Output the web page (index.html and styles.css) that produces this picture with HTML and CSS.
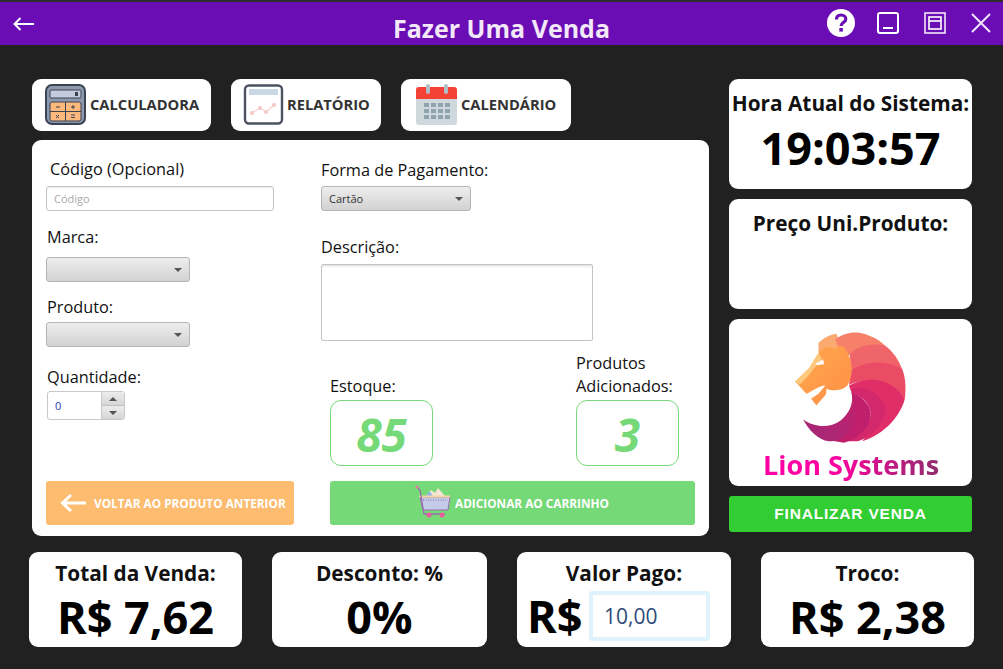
FILE: index.html
```html
<!DOCTYPE html>
<html lang="pt-BR">
<head>
<meta charset="utf-8">
<title>Fazer Uma Venda</title>
<link rel="stylesheet" href="styles.css">
</head>
<body>
<header class="titlebar">
  <svg class="back" viewBox="0 0 21 14" width="21" height="14"><path d="M1 7H21M7.500 1L1.500 7L7.500 13" fill="none" stroke="#fff" stroke-width="2"/></svg>
  <h1 class="title">Fazer Uma Venda</h1>
  <div class="win">
    <svg width="30" height="30" viewBox="0 0 30 30"><circle cx="15" cy="15" r="14" fill="#fff"/><path d="M10.500 11.500C10.500 8.500 12.500 7 15 7C17.800 7 19.800 8.700 19.800 11C19.800 14.500 15.200 14.500 15.200 17.500V18" fill="none" stroke="#6a0db5" stroke-width="3.200"/><rect x="13.300" y="20" width="3.600" height="3.600" fill="#6a0db5"/></svg>
    <svg width="22" height="22" viewBox="0 0 22 22"><rect x="1" y="1" width="20" height="20" rx="2" fill="none" stroke="#fff" stroke-width="2"/><path d="M6 16H16" stroke="#fff" stroke-width="2"/></svg>
    <svg width="22" height="22" viewBox="0 0 22 22"><rect x="1" y="1" width="20" height="20" fill="none" stroke="#f2e6fa" stroke-width="1.600"/><rect x="5" y="5" width="12" height="12" fill="none" stroke="#fff" stroke-width="1.600"/><path d="M5 9H17" stroke="#fff" stroke-width="1.600"/></svg>
    <svg width="20" height="20" viewBox="0 0 20 20"><path d="M1 1L19 19M19 1L1 19" stroke="#f2e6fa" stroke-width="2"/></svg>
  </div>
</header>

<main class="main">
  <section class="left">
    <nav class="tools">
      <button class="tool tool-calc">
        <svg width="41" height="41" viewBox="0 0 41 41"><rect x="1" y="1" width="39" height="39" rx="6" fill="#8d99ae" stroke="#3b4252" stroke-width="2"/><rect x="5" y="6" width="31" height="8" rx="1" fill="#c3cbdc" stroke="#3b4252"/><rect x="30" y="8" width="3" height="4" fill="#3b4252"/><rect x="5" y="18" width="31" height="19" rx="2" fill="#fdb97d" stroke="#3b4252"/><path d="M20.500 18V37M5 27.500H36" stroke="#3b4252"/><path d="M11 23H15M26 23H30M28 21V25M11 31L14 34M14 31L11 34M26 31H30M26 33.500H30" stroke="#3b4252"/></svg>
        <span>CALCULADORA</span>
      </button>
      <button class="tool tool-rel">
        <svg width="41" height="41" viewBox="0 0 41 41"><rect x="2" y="1.500" width="37" height="38" rx="4" fill="#fff" stroke="#4c5260" stroke-width="2.400"/><rect x="6" y="5" width="29" height="6" fill="#c9d8e4"/><path d="M9 29L17 24L23 28L31 21" fill="none" stroke="#f6d2d2" stroke-width="1.200"/><circle cx="9" cy="29" r="2" fill="#f4c6c6"/><circle cx="17" cy="24" r="2" fill="#f4c6c6"/><circle cx="23" cy="28" r="2" fill="#f4c6c6"/><circle cx="31" cy="21" r="2" fill="#f4c6c6"/></svg>
        <span>RELATÓRIO</span>
      </button>
      <button class="tool tool-cal">
        <svg width="41" height="41" viewBox="0 0 41 41"><rect x="0" y="3" width="41" height="38" rx="3" fill="#cfd8dc"/><path d="M0 15V6a3 3 0 0 1 3-3H38a3 3 0 0 1 3 3V15Z" fill="#f44336"/><rect x="10" y="0" width="4" height="10" rx="2" fill="#b0bec5"/><rect x="28" y="0" width="4" height="10" rx="2" fill="#b0bec5"/><g class="cal-grid"><rect x="8" y="19" width="5" height="4"/><rect x="15" y="19" width="5" height="4"/><rect x="22" y="19" width="5" height="4"/><rect x="29" y="19" width="5" height="4"/><rect x="8" y="25" width="5" height="4"/><rect x="15" y="25" width="5" height="4"/><rect x="22" y="25" width="5" height="4"/><rect x="29" y="25" width="5" height="4"/><rect x="8" y="31" width="5" height="4"/><rect x="15" y="31" width="5" height="4"/><rect x="22" y="31" width="5" height="4"/><rect x="29" y="31" width="5" height="4"/></g></svg>
        <span>CALENDÁRIO</span>
      </button>
    </nav>

    <form class="form">
      <div class="columns">
        <div class="col-a">
          <label class="lab lab-code">Código (Opcional)</label>
          <input class="field" placeholder="Código">
          <label class="lab lab-marca">Marca:</label>
          <div class="combo"><i class="caret"></i></div>
          <label class="lab lab-prod">Produto:</label>
          <div class="combo"><i class="caret"></i></div>
          <label class="lab lab-qtd">Quantidade:</label>
          <div class="spinner">
            <span class="spin-val">0</span>
            <span class="spin-btns"><b><i class="caret up"></i></b><b><i class="caret"></i></b></span>
          </div>
        </div>
        <div class="col-b">
          <label class="lab lab-forma">Forma de Pagamento:</label>
          <div class="combo combo-pay"><span>Cartão</span><i class="caret"></i></div>
          <label class="lab lab-desc">Descrição:</label>
          <textarea class="desc"></textarea>
          <div class="stats">
            <div class="stat">
              <div class="stat-lab">Estoque:</div>
              <div class="stat-box">85</div>
            </div>
            <div class="stat">
              <div class="stat-lab">Produtos<br>Adicionados:</div>
              <div class="stat-box">3</div>
            </div>
          </div>
        </div>
      </div>
      <div class="actions">
        <button type="button" class="act act-back">
          <svg width="26" height="20" viewBox="0 0 26 20"><path d="M26 10H3M11 2L2.500 10L11 18" fill="none" stroke="#fff" stroke-width="3"/></svg>
          <span>VOLTAR AO PRODUTO ANTERIOR</span>
        </button>
        <button type="button" class="act act-add">
          <svg class="cart" width="36" height="34" viewBox="0 0 36 34"><path d="M10 12L16 5L20 8L23 3L30 11Z" fill="#f7e6d8"/><path d="M10 12L15 6L18 12Z" fill="#8db4e2"/><path d="M5 12H35L33 25H8Z" fill="#c3cbe8" stroke="#9a6bb0"/><path d="M4 11.500H35" stroke="#f2d6a0" stroke-width="2"/><path d="M8 15H32" stroke="#8a6bb0" stroke-dasharray="1 1.500"/><path d="M2 2L5 5L9 29H30" fill="none" stroke="#9a6bb0" stroke-width="1.300"/><circle cx="2" cy="2" r="1.500" fill="#e87aa8"/><circle cx="14" cy="30" r="2.500" fill="#e8609a"/><circle cx="27" cy="30" r="2.500" fill="#e8609a"/></svg>
          <span>ADICIONAR AO CARRINHO</span>
        </button>
      </div>
    </form>
  </section>

  <aside class="right">
    <div class="card card-time">
      <div class="h">Hora Atual do Sistema:</div>
      <div class="clock">19:03:57</div>
    </div>
    <div class="card card-price">
      <div class="h">Preço Uni.Produto:</div>
    </div>
    <div class="card card-logo">
      <svg class="lion" width="245" height="133" viewBox="0 0 735 400">
        <defs>
          <linearGradient id="g1" x1="0" y1="1" x2="1" y2="0"><stop offset="0" stop-color="#a02a78"/><stop offset="1" stop-color="#c41f6c"/></linearGradient>
          <linearGradient id="g2" x1="0" y1="0" x2="1" y2="1"><stop offset="0" stop-color="#ffa84f"/><stop offset="1" stop-color="#ff8f45"/></linearGradient>
        </defs>
        <path d="M268 72C285 55 305 46 322 44L340 90L268 100Z" fill="#fbaa70"/>
        <path d="M318 62C340 44 370 38 395 42C430 50 455 65 470 82C420 75 385 85 362 110L330 90Z" fill="#f7806a"/>
        <path d="M362 108C385 80 425 72 468 80C495 100 510 125 520 152C470 130 420 135 368 165Z" fill="#f0656a"/>
        <path d="M366 155C420 120 480 128 520 150C530 175 532 205 528 240C490 190 430 170 360 198Z" fill="#ea4c66"/>
        <path d="M360 200C425 165 495 185 528 240C515 290 470 345 400 368C445 310 455 260 420 225C405 212 385 208 365 214Z" fill="#e02f68"/>
        <path d="M365 212C415 195 455 225 470 270C470 310 430 355 385 368L345 368C400 340 430 310 425 280C420 250 395 230 368 225Z" fill="#d3286c"/>
        <path d="M368 222C405 235 430 265 425 295C415 335 385 360 345 372L300 365C350 350 380 310 372 260Z" fill="#bf1f6c"/>
        <path d="M222 302C255 325 300 330 335 305C360 285 375 255 368 222C385 250 385 300 362 335C345 355 325 368 300 368C265 362 240 335 222 302Z" fill="url(#g1)"/>
        <path d="M268 102L280 90C295 83 308 84 318 90C326 76 350 78 354 100C370 125 375 170 355 200C340 216 312 218 292 210L291 226L262 260L246 240L268 225L289 200C270 200 245 220 232 225L198 188L240 148Z" fill="url(#g2)"/>
        <path d="M198 188L240 148L268 102L278 118L240 168L212 198Z" fill="#fdc97c"/>
        <path d="M258 135L282 121L285 136L265 139Z" fill="#fff"/>
      </svg>
      <div class="brand">Lion Systems</div>
    </div>
    <button class="finish">FINALIZAR VENDA</button>
  </aside>
</main>

<footer class="totals">
  <div class="card total total-a"><div class="t">Total da Venda:</div><div class="v">R$ 7,62</div></div>
  <div class="card total total-b"><div class="t">Desconto: %</div><div class="v">0%</div></div>
  <div class="card total total-c">
    <div class="t">Valor Pago:</div>
    <div class="pay"><span class="v">R$</span><input class="paid" value="10,00"></div>
  </div>
  <div class="card total total-a"><div class="t">Troco:</div><div class="v">R$ 2,38</div></div>
</footer>
</body>
</html>
```

FILE: styles.css
```css
* { box-sizing: border-box; }
html, body { margin: 0; height: 669px; overflow: hidden; }
body {
  width: 1003px;
  background: #212121;
  border-top: 2px solid #2e2e2e;
  font-family: "Open Sans", "Noto Sans", sans-serif;
  color: #111;
}
button { font-family: inherit; border: 0; padding: 0; cursor: pointer; }

/* title bar */
.titlebar {
  position: relative;
  height: 43px;
  background: #6a0db5;
  display: flex;
  align-items: center;
  justify-content: space-between;
  padding: 0 12px 0 13px;
}
.title {
  position: absolute;
  left: 0; right: 0; top: 10px;
  margin: 0;
  text-align: center;
  font-size: 25px;
  line-height: 32px;
  font-weight: 700;
  color: #f3e8f8;
}
.win { display: flex; align-items: center; gap: 25px; margin-top: -1px; }
.win svg:first-child { margin-right: -4px; }

/* main */
.main { display: flex; gap: 20px; padding: 34px 0 0 32px; }
.left { width: 677px; }
.right { width: 243px; display: flex; flex-direction: column; gap: 10px; }

.tools { display: flex; gap: 20px; height: 52px; margin-bottom: 9px; }
.tool {
  height: 52px;
  background: #fff;
  border-radius: 9px;
  display: flex;
  align-items: center;
  gap: 4px;
  padding-bottom: 2px;
  font-size: 14.700px;
  font-weight: 700;
  color: #333;
}
.tool svg { flex: none; margin-bottom: -1px; }
.tool-calc { width: 179px; padding-left: 13px; }
.tool-rel { width: 150px; padding-left: 12px; gap: 3px; }
.tool-cal { width: 170px; padding-left: 15px; }
.cal-grid { fill: #90a4ae; }

/* form */
.form {
  height: 396px;
  background: #fff;
  border-radius: 9px;
  padding: 19px 14px 11px;
}
.columns { display: flex; height: 308px; }
.col-a { width: 275px; }
.col-b { flex: 1; padding-top: 1px; }
.lab { display: block; font-size: 16.300px; line-height: 20px; color: #111; }
.lab-code { margin: 0 0 7px 4px; }
.lab-marca { margin: 16px 0 10px 1px; }
.lab-prod { margin: 15px 0 5px 1px; }
.lab-qtd { margin: 20px 0 4px 1px; }
.lab-forma { margin-bottom: 6px; }
.lab-desc { margin: 26px 0 7px; }

.field {
  display: block;
  width: 228px; height: 25px;
  border: 1px solid #c4c4c4;
  border-radius: 3px;
  padding: 0 7px;
  font: 11px "Open Sans", sans-serif;
  outline: 0;
  box-shadow: inset 0 2px 2px -1px #e8e8e8;
}
.field::placeholder { color: #aaa; opacity: 1; }
.combo {
  width: 144px; height: 25px;
  border: 1px solid #b5b5b5;
  border-radius: 3px;
  background: linear-gradient(#ededed, #d2d2d2);
  display: flex;
  align-items: center;
  justify-content: flex-end;
  padding: 0 7px;
  font-size: 11px;
  color: #333;
}
.combo-pay { width: 150px; justify-content: space-between; }
.caret {
  width: 0; height: 0;
  border-left: 4px solid transparent;
  border-right: 4px solid transparent;
  border-top: 4px solid #555;
}
.caret.up { border-top: 0; border-bottom: 4px solid #555; }

.spinner {
  margin-left: 1px;
  width: 78px; height: 29px;
  display: flex;
  border: 1px solid #c8c8c8;
  border-radius: 3px;
}
.spin-val { flex: 1; font-size: 11px; line-height: 27px; padding-left: 7px; color: #2a3aa8; }
.spin-btns { width: 23px; display: flex; flex-direction: column; border-left: 1px solid #c8c8c8; }
.spin-btns b {
  flex: 1;
  display: flex;
  align-items: center;
  justify-content: center;
  background: linear-gradient(#ececec, #d6d6d6);
}
.spin-btns b + b { border-top: 1px solid #c0c0c0; }

.desc {
  display: block;
  width: 272px; height: 77px;
  border: 1px solid #c4c4c4;
  border-radius: 2px;
  outline: 0;
  resize: none;
  box-shadow: inset 0 3px 3px -2px #d8d8d8;
}
.stats { display: flex; gap: 143px; align-items: flex-end; padding: 11px 0 0 9px; }
.stat { width: 103px; }
.stat-lab { font-size: 16.300px; line-height: 23px; white-space: nowrap; margin-bottom: 2px; }
.stat-box {
  height: 66px;
  border: 1px solid #77d977;
  border-radius: 11px;
  text-align: center;
  font-size: 46px;
  line-height: 66px;
  font-weight: 700;
  font-style: italic;
  color: #75d977;
}

.actions { display: flex; gap: 36px; margin-top: 14px; }
.act {
  height: 44px;
  border-radius: 3px;
  color: #fff;
  font-size: 11.800px;
  font-weight: 700;
  display: flex;
  align-items: center;
}
.act-back { width: 248px; background: #fdbc6f; padding-left: 14px; gap: 8px; }
.act-add { width: 365px; background: #75d977; padding-left: 85px; gap: 4px; }
.cart { margin-top: -3px; }

/* right column */
.card { background: #fff; border-radius: 9px; }
.card-time, .card-price { height: 110px; text-align: center; }
.h { font-size: 20.800px; font-weight: 700; line-height: 28px; padding-top: 10px; color: #111; white-space: nowrap; }
.clock { font-size: 45px; line-height: 60px; font-weight: 700; color: #000; margin-top: 1px; }
.card-logo { height: 167px; text-align: center; }
.lion { display: block; }
.brand {
  font-size: 27px;
  line-height: 32px;
  margin: -3px 0 0 34px;
  font-weight: 700;
  background: linear-gradient(90deg, #ff00a6 0%, #ff00a0 40%, #8f2d6c 100%);
  -webkit-background-clip: text;
  background-clip: text;
  color: transparent;
  width: max-content;
}
.finish {
  height: 36px;
  background: #32cd32;
  border-radius: 3px;
  color: #fff;
  font: 700 15.500px "Liberation Sans", sans-serif;
  letter-spacing: .8px;
}

/* totals */
.totals { display: flex; gap: 30px; padding: 16px 0 0 29px; }
.total { height: 95px; text-align: center; }
.total-a { width: 213px; }
.total-b { width: 215px; }
.total-c { width: 214px; }
.t { font-size: 20.800px; font-weight: 700; line-height: 28px; padding-top: 7px; color: #111; }
.v { font-size: 45px; line-height: 60px; font-weight: 700; color: #000; }
.pay { display: flex; align-items: center; gap: 9px; padding-left: 10px; margin-top: -1px; }
.pay .v { width: 53px; white-space: nowrap; }
.paid {
  width: 121px; height: 50px;
  border: 4px solid #e0f2fb;
  border-radius: 3px;
  outline: 0;
  padding: 0 11px;
  font: 21px "Open Sans", sans-serif;
  color: #2f4a78;
}
```
